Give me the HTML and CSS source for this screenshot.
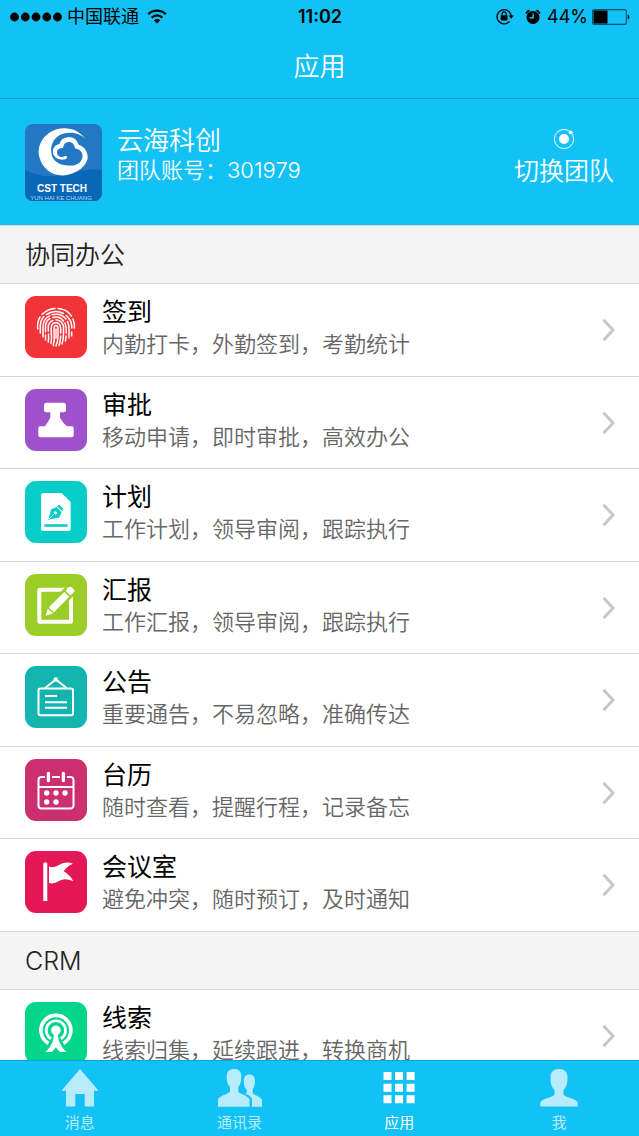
FILE: index.html
```html
<!DOCTYPE html>
<html lang="zh-CN">
<head>
<meta charset="utf-8">
<meta name="viewport" content="width=device-width, initial-scale=1">
<title>应用</title>
<link rel="stylesheet" href="styles.css">
</head>
<body>
<div class="app">
  <div class="status">
    <div class="status-side">
      <svg class="signal" width="52" height="10" viewBox="0 0 52 10"><circle cx="4.500" cy="5" r="4.400"/><circle cx="15.300" cy="5" r="4.400"/><circle cx="26" cy="5" r="4.400"/><circle cx="36.800" cy="5" r="4.400"/><circle cx="47.500" cy="5" r="4.400"/></svg>
      <span>中国联通</span>
      <svg class="wifi" width="20" height="15" viewBox="0 0 20 15"><g fill="none" stroke="#000" stroke-width="2.200"><path d="M1.200 5.200a12.500 12.500 0 0 1 17.600 0"/><path d="M4.600 8.700a7.600 7.600 0 0 1 10.800 0"/></g><path d="M10 14.500 6.800 11.300a4.500 4.500 0 0 1 6.400 0z"/></svg>
    </div>
    <div class="status-time">11:02</div>
    <div class="status-side status-right">
      <svg width="18" height="17" viewBox="0 0 18 17"><path d="M13.600 13.300A7.100 7.100 0 1 1 15.200 8" fill="none" stroke="#000" stroke-width="1.300"/><path d="M12.500 7.500h5.400l-2.700 3.200z"/><rect x="4.700" y="7.200" width="6.800" height="5.200" rx=".6"/><path d="M6.100 7.500V5.800a2 2 0 0 1 4 0v1.700" fill="none" stroke="#000" stroke-width="1.200"/></svg>
      <svg class="alarm" width="16" height="16" viewBox="0 0 16 16"><circle cx="8" cy="8.400" r="6.500"/><path d="M1 4.500A8.500 8.500 0 0 1 4.500 1.200M15 4.500a8.500 8.500 0 0 0-3.500-3.300" fill="none" stroke="#000" stroke-width="1.800"/><path d="M8.200 4.500v4.300H4.700" fill="none" stroke="#12c1f5" stroke-width="1.400"/></svg>
      <span>44%</span>
      <svg width="38" height="16" viewBox="0 0 38 16"><rect x=".6" y=".6" width="33.800" height="14.800" rx="2" fill="none" stroke="#07566e" stroke-width="1.100"/><path d="M1.500 1.500h14v13h-14zM35.800 5.500c2 .8 2 4.200 0 5z"/></svg>
    </div>
  </div>
  <header class="nav"><h1>应用</h1></header>

  <main class="content">
    <section class="team">
      <svg class="team-logo" width="77" height="77" viewBox="0 0 77 77" role="img" aria-label="CST TECH">
        <defs><clipPath id="logo-clip"><rect width="77" height="77" rx="8"/></clipPath></defs>
        <g clip-path="url(#logo-clip)">
          <rect width="77" height="77" fill="#2378c4"/>
          <path d="M0 46Q20 56 42 50T77 46V77H0z" fill="#0867b7"/>
          <path d="M61 15.500C54 5.500 42 2 31 5.500 18 10 11.500 22 14.500 33.500 18 47 31 54 44 50.500 57 47 64 38 62.500 31 61.500 25 57.500 22 53.500 20.500 51.500 14.500 47.500 12.500 43 13.300 38 13.500 35.500 16.500 34.500 20 29.500 20.500 26.500 26 28.500 30.500 30.500 35.500 38 37 41.500 34.500 43 33 42 31.500 40 32 36.500 34.500 32 32 32 28.500 32 25 35 24 38 24 38.500 19.500 41 17.500 44.500 18 48 18.500 49.500 21 50 24.500 55 25 58 28.500 57.500 33 56.500 39 51 42 45 41.500 36 42 28 38 26.500 30 24.500 20 30 11.500 39 9.500 48 7.500 56 10 61 15.500z" fill="#fff"/>
          <text class="logo-name" x="37" y="68" text-anchor="middle">CST TECH</text>
          <text class="logo-sub" x="36" y="76" text-anchor="middle">YUN HAI KE CHUANG</text>
        </g>
      </svg>
      <div class="team-info">
        <h2>云海科创</h2>
        <p>团队账号：301979</p>
      </div>
      <button class="switch" type="button">
        <svg width="22" height="22" viewBox="0 0 22 22"><circle cx="11" cy="11" r="9.600" fill="none" stroke="#fff" stroke-width="1"/><circle cx="11" cy="11" r="5" fill="#fff"/><circle cx="17.700" cy="4.300" r="1.900" fill="#fff"/></svg>
        <span>切换团队</span>
      </button>
    </section>

    <h2 class="group">协同办公</h2>
    <ul class="list office">
      <li><a class="row" href="#checkin">
        <svg class="icon" viewBox="0 0 62 62"><rect width="62" height="62" rx="11" fill="#f23439"/>
          <g fill="none" stroke="#fff" stroke-width="1.500" stroke-linecap="round">
            <path d="M17 18.500Q22.500 13 30 12.500M33 12.500Q42 13 46.500 20M15 21Q12 26 12.700 33M48 23Q50 28 49.300 32"/>
            <path d="M15.300 37V30Q15.500 24 19 20.500M21.500 18.500Q30 13 38.500 17.500M41 19.500Q47 24 46.800 32M46.700 36V40"/>
            <path d="M18 41V31Q18 23 24.500 19.800M27 18.700Q36 16.500 41 23M42.500 25.500Q44.300 29 44 34V42"/>
            <path d="M20.500 36V31Q20.500 25 25 22.500M28 21.400Q35 20 38.500 25M40 27Q41.500 31 41.300 37M41 40 40.500 45M20.500 39V44"/>
            <path d="M23.200 46Q24 42 23.500 38M23.300 35V31Q23.500 26 28 24.400M31 23.800Q37 24.500 38.500 30V38Q38.500 43 37 48"/>
            <path d="M26 47.500Q27 42 26.200 36V32Q26.500 27 31 26.600 35 27 35.700 32V37M35.700 40Q35.500 45 34 49.500"/>
            <path d="M28.300 49.500Q30 43 29 36V32Q29.300 29.500 31 29.500 33 29.500 33 33V39Q33 45 31 50"/>
            <path d="M31 33V42"/>
          </g></svg>
        <span class="row-text"><b>签到</b><small>内勤打卡，外勤签到，考勤统计</small></span>
        <svg class="chevron" viewBox="0 0 14 24"><path d="M1.500 1.700 11 12 1.500 22.300"/></svg></a></li>
      <li><a class="row" href="#approve">
        <svg class="icon" viewBox="0 0 62 62"><rect width="62" height="62" rx="11" fill="#9f50cb"/><path d="M21.500 13.700h17a2.500 2.500 0 0 1 2.500 2.500v4.600a2.500 2.500 0 0 1-2.500 2.500H35v5.400Q38 34 42 37.300h4.700a2 2 0 0 1 2 2v7a2 2 0 0 1-2 2H15.300a2 2 0 0 1-2-2v-7a2 2 0 0 1 2-2H20Q23 33 25.300 28.700v-5.400h-3.800a2.500 2.500 0 0 1-2.500-2.500v-4.600a2.500 2.500 0 0 1 2.500-2.500z" fill="#fff"/></svg>
        <span class="row-text"><b>审批</b><small>移动申请，即时审批，高效办公</small></span>
        <svg class="chevron" viewBox="0 0 14 24"><path d="M1.500 1.700 11 12 1.500 22.300"/></svg></a></li>
      <li><a class="row" href="#plan">
        <svg class="icon" viewBox="0 0 62 62"><rect width="62" height="62" rx="11" fill="#06cdc8"/><path d="M18.500 12h18l9.200 9v26.500a2.500 2.500 0 0 1-2.500 2.500H18.500a2.500 2.500 0 0 1-2.500-2.500v-33a2.500 2.500 0 0 1 2.500-2.500z" fill="#fff"/><g fill="#06cdc8"><path d="M19.300 43.200h23.400v2.600H19.300z"/><path d="M23.300 38.800 26 28.500 31.500 26 36.500 31 34.300 36.500z"/><path d="M32 25.300 34 23.600 38.200 28 37.300 30.200zM35 23l3.500 3.700"/></g><path d="M24 38 29.500 32.500" stroke="#fff" stroke-width=".8"/><circle cx="30.300" cy="31.800" r="1.600" fill="#fff"/></svg>
        <span class="row-text"><b>计划</b><small>工作计划，领导审阅，跟踪执行</small></span>
        <svg class="chevron" viewBox="0 0 14 24"><path d="M1.500 1.700 11 12 1.500 22.300"/></svg></a></li>
      <li><a class="row" href="#report">
        <svg class="icon" viewBox="0 0 62 62"><rect width="62" height="62" rx="11" fill="#9acd26"/><rect x="14.300" y="15.700" width="31.700" height="32" rx=".5" fill="none" stroke="#fff" stroke-width="4"/><path d="M18.700 43.700 21.500 32 40.500 13 49.500 21 30 40.500z" fill="#9acd26"/><g fill="#fff"><path d="M20.700 41.700 22.800 34.500 27.800 39.500z"/><path d="M23.800 33.300 39.300 17.900 44.200 22.800 28.800 38.400z"/><path d="M40.500 16.700 43.800 13.500Q45.300 12 46.800 13.300L49 15.600Q50.200 17 48.900 18.300L45.400 21.600z"/></g></svg>
        <span class="row-text"><b>汇报</b><small>工作汇报，领导审阅，跟踪执行</small></span>
        <svg class="chevron" viewBox="0 0 14 24"><path d="M1.500 1.700 11 12 1.500 22.300"/></svg></a></li>
      <li><a class="row" href="#notice">
        <svg class="icon" viewBox="0 0 62 62"><rect width="62" height="62" rx="11" fill="#14b5b1"/><g fill="none" stroke="#fff" stroke-width="2"><rect x="13.500" y="22.500" width="34.500" height="26.700" rx="2"/><path d="M20 22 30.800 13.500 41.600 22M20 30h12M20 36.300h22M20 41.800h22"/></g><circle cx="30.800" cy="13.500" r="2.200" fill="#fff"/></svg>
        <span class="row-text"><b>公告</b><small>重要通告，不易忽略，准确传达</small></span>
        <svg class="chevron" viewBox="0 0 14 24"><path d="M1.500 1.700 11 12 1.500 22.300"/></svg></a></li>
      <li><a class="row" href="#calendar">
        <svg class="icon" viewBox="0 0 62 62"><rect width="62" height="62" rx="11" fill="#cb2f70"/><g fill="none" stroke="#fff" stroke-width="2"><path d="M20 18h-3.500a3 3 0 0 0-3 3v25.500a3 3 0 0 0 3 3h29a3 3 0 0 0 3-3V21a3 3 0 0 0-3-3H42M27 18h8M13.500 28h35"/><path d="M23.400 14.300v7.200M38.400 14.300v7.200" stroke-width="3.300" stroke-linecap="round"/></g><g fill="#fff"><circle cx="21.700" cy="34" r="2.700"/><circle cx="31" cy="34" r="2.700"/><circle cx="40" cy="34" r="2.700"/><circle cx="21.700" cy="43" r="2.700"/><circle cx="31" cy="43" r="2.700"/></g></svg>
        <span class="row-text"><b>台历</b><small>随时查看，提醒行程，记录备忘</small></span>
        <svg class="chevron" viewBox="0 0 14 24"><path d="M1.500 1.700 11 12 1.500 22.300"/></svg></a></li>
      <li><a class="row" href="#meeting">
        <svg class="icon" viewBox="0 0 62 62"><rect width="62" height="62" rx="11" fill="#e41856"/><path d="M18.300 12.300 20.300 11 22.300 12.300V50h-4zM24 15.500Q28 17.500 33 14.500 40 9.500 48 12.700 42.500 14.500 38.800 20.300 45 24 48.400 30.300 39.500 26.500 34 30 29 33.500 24 32z" fill="#fff"/></svg>
        <span class="row-text"><b>会议室</b><small>避免冲突，随时预订，及时通知</small></span>
        <svg class="chevron" viewBox="0 0 14 24"><path d="M1.500 1.700 11 12 1.500 22.300"/></svg></a></li>
    </ul>

    <h2 class="group">CRM</h2>
    <ul class="list">
      <li><a class="row" href="#leads">
        <svg class="icon" viewBox="0 0 62 62"><rect width="62" height="62" rx="11" fill="#04d58c"/><g fill="none" stroke="#fff"><path d="M23.500 41.400a15 15 0 1 1 14.800 0" stroke-width="3.600"/><path d="M26 36.800a9.700 9.700 0 1 1 9.800 0" stroke-width="2.700"/></g><circle cx="30.900" cy="28.300" r="4.800" fill="#fff"/><path d="M29 31h3.800l.8 7Q36 45 41.300 50H35L30.900 45.600 26.800 50H20.500Q26 45 28.200 38z" fill="#fff"/></svg>
        <span class="row-text"><b>线索</b><small>线索归集，延续跟进，转换商机</small></span>
        <svg class="chevron" viewBox="0 0 14 24"><path d="M1.500 1.700 11 12 1.500 22.300"/></svg></a></li>
    </ul>
  </main>

  <nav class="tabs">
    <a href="#messages"><svg width="44" height="38" viewBox="0 0 44 38"><path d="M22 0 40.500 21.700H36V37.500H26.700V25H17.300V37.500H8V21.700H3.500z"/></svg><span>消息</span></a>
    <a href="#contacts"><svg width="44" height="38" viewBox="0 0 44 38"><path d="M16 0C20.500 0 23.300 2.500 23.300 7 23.300 12 22.500 15.500 20.300 18V22.500C21.500 25 29 26 31.500 30V37.700H0V30C3 26 10.500 25 12 22.500V18C9.500 15.500 8.500 12 8.700 7 9 2.500 11.500 0 16 0z"/><path d="M31.300 5.500C35 5.500 37 8 37 12 37 16 36 18.500 34.700 20V24C36 26.500 41.500 26.500 44 31V37.700H34V30.500C33.500 27.500 30.500 26 27.500 24.700 29 24 28.800 22 28.500 20.500 26.500 18.500 25.700 16 25.700 12 25.700 8 27.500 5.500 31.300 5.500z"/></svg><span>通讯录</span></a>
    <a href="#apps" class="active" aria-current="page"><svg width="44" height="38" viewBox="0 0 44 38"><path d="M6.500 3h8v8h-8zM18 3h8v8h-8zM29.600 3h8v8h-8zM6.500 14.700h8v8h-8zM18 14.700h8v8h-8zM29.600 14.700h8v8h-8zM6.500 26.300h8v8h-8zM18 26.300h8v8h-8zM29.600 26.300h8v8h-8z"/></svg><span>应用</span></a>
    <a href="#me"><svg width="44" height="38" viewBox="0 0 44 38"><path d="M22 0C27.500 0 30.500 3 30.500 8 30.800 14 29.500 18 26.500 21V25.500C28.500 29 38 28.500 40.700 33.500V37.500H3.300V33.500C6 28.500 15.500 29 17.500 25.500V21C14.500 18 13.200 14 13.500 8 13.500 3 16.500 0 22 0z"/></svg><span>我</span></a>
  </nav>
</div>
</body>
</html>
```

FILE: styles.css
```css
* {
  box-sizing: border-box;
}

body,
h1,
h2,
p,
ul {
  margin: 0;
  padding: 0;
}

body {
  font-family: Inter, "Noto Sans CJK SC", sans-serif;
  color: #000;
  background: #fff;
}

ul {
  list-style: none;
}

a {
  color: inherit;
  text-decoration: none;
}

svg {
  display: block;
  flex: none;
}

.app {
  display: flex;
  flex-direction: column;
  height: 100vh;
}

.status {
  display: grid;
  grid-template-columns: 1fr auto 1fr;
  align-items: center;
  height: 32px;
  padding: 1px 9px 0 10px;
  background: #12c1f5;
  font-size: 18px;
  line-height: 24px;
}

.status-side {
  display: flex;
  align-items: center;
}

.signal {
  margin-right: 5px;
}

.wifi {
  margin-left: 8px;
}

.status-time {
  font-weight: 600;
}

.status-right {
  justify-content: flex-end;
  gap: 4px;
}

.alarm {
  margin: 0 2px 0 7px;
}

.nav {
  padding: 14px 0 11px;
  border-bottom: 1px solid #109fcb;
  background: #12c1f5;
  color: #fff;
  text-align: center;
}

.nav h1 {
  font-size: 26px;
  font-weight: 350;
  line-height: 41px;
}

.content {
  flex: 1;
  min-height: 0;
  overflow-y: auto;
  scrollbar-width: none;
}

.team {
  display: flex;
  align-items: flex-start;
  gap: 15px;
  padding: 25px 25px 24px;
  border-bottom: 1px solid #d9d9d9;
  background: #12c1f5;
  color: #fff;
}

.logo-name {
  font: bold 10px "Liberation Sans", sans-serif;
  fill: #fff;
}

.logo-sub {
  font: 6px "Liberation Sans", sans-serif;
  fill: #b9d7f0;
}

.team-info {
  flex: 1;
}

.team-info h2 {
  font-size: 26px;
  font-weight: 350;
  line-height: 34px;
}

.team-info p {
  font-size: 22px;
  font-weight: 350;
  line-height: 24px;
}

.switch {
  display: flex;
  flex-direction: column;
  align-items: center;
  gap: 4px;
  padding: 4px 0 0;
  border: 0;
  background: none;
  color: inherit;
  font: 350 25px/34px Inter, "Noto Sans CJK SC", sans-serif;
}

.group {
  padding: 13px 25px 11px;
  border-bottom: 1px solid #d9d9d9;
  background: #f4f4f4;
  color: #222;
  font-size: 25px;
  font-weight: 350;
  line-height: 33px;
}

.list {
  display: grid;
  grid-auto-rows: 1fr;
}

.office {
  min-height: 648px;
}

.row {
  display: flex;
  align-items: flex-start;
  gap: 15px;
  height: 100%;
  padding: 12px 23px 0 25px;
  border-bottom: 1px solid #d9d9d9;
}

.list li {
  min-height: 92px;
}

.icon {
  width: 62px;
  height: 62px;
}

.row-text {
  display: flex;
  flex: 1;
  flex-direction: column;
  gap: 2px;
}

.row-text b {
  font-size: 25px;
  font-weight: 400;
  line-height: 32px;
}

.row-text small {
  color: #666;
  font-size: 22px;
  font-weight: 350;
  line-height: 28px;
}

.chevron {
  width: 14px;
  height: 24px;
  margin-top: 22px;
  fill: none;
  stroke: #c7c7cc;
  stroke-width: 3;
}

.tabs {
  display: grid;
  grid-template-columns: repeat(4, 1fr);
  border-top: 1px solid #0fa5d2;
  background: #12c1f5;
}

.tabs a {
  display: flex;
  flex-direction: column;
  align-items: center;
  gap: 5px;
  padding: 8px 0 2px;
  color: #b8ecfc;
  font-size: 15px;
  line-height: 22px;
}

.tabs svg {
  fill: currentColor;
}

.tabs .active {
  color: #fff;
}
```
